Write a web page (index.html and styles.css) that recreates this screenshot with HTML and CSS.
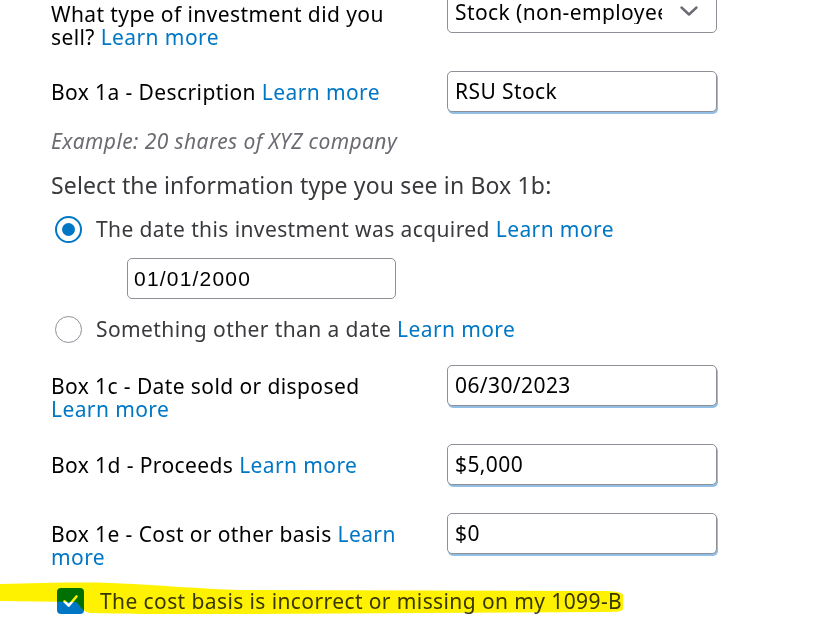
FILE: index.html
```html
<!DOCTYPE html>
<html lang="en">
<head>
<meta charset="utf-8">
<title>1099-B entry</title>
<link rel="stylesheet" href="styles.css">
</head>
<body>
<form class="form">
  <div class="row row-type">
    <div class="label">What type of investment did you sell? <a class="link" href="#">Learn more</a></div>
    <div class="select">
      <span class="select-text">Stock (non-employee stock plan)</span>
      <svg class="chevron" width="18" height="10" viewBox="0 0 18 10"><path d="M1.5 1.5 L9 8.5 L16.5 1.5" fill="none" stroke="#6b6c72" stroke-width="2.4" stroke-linecap="round" stroke-linejoin="round"/></svg>
    </div>
  </div>

  <div class="row row-desc">
    <div class="label">Box 1a - Description <a class="link" href="#">Learn more</a></div>
    <div class="input input-shadow">RSU Stock</div>
  </div>

  <p class="example">Example: 20 shares of XYZ company</p>

  <p class="question">Select the information type you see in Box 1b:</p>

  <div class="radio-row radio-first">
    <span class="radio radio-on"></span>
    <span class="radio-label">The date this investment was acquired <a class="link" href="#">Learn more</a></span>
  </div>
  <div class="input date-input">01/01/2000</div>

  <div class="radio-row radio-second">
    <span class="radio"></span>
    <span class="radio-label">Something other than a date <a class="link" href="#">Learn more</a></span>
  </div>

  <div class="row row-1c">
    <div class="label">Box 1c - Date sold or disposed <a class="link" href="#">Learn more</a></div>
    <div class="input input-shadow">06/30/2023</div>
  </div>

  <div class="row row-1d">
    <div class="label">Box 1d - Proceeds <a class="link" href="#">Learn more</a></div>
    <div class="input input-shadow">$5,000</div>
  </div>

  <div class="row row-1e">
    <div class="label">Box 1e - Cost or other basis <a class="link" href="#">Learn more</a></div>
    <div class="input input-shadow">$0</div>
  </div>

  <div class="check-row">
    <span class="checkbox">
      <svg width="27" height="26" viewBox="0 0 27 26"><path d="M7.5 13.5 L11.8 17.5 L19.5 8.5" fill="none" stroke="#fff" stroke-width="2.6" stroke-linecap="round" stroke-linejoin="round"/></svg>
    </span>
    <span class="check-label">The cost basis is incorrect or missing on my 1099-B</span>
    <svg class="highlight" width="640" height="40" viewBox="0 580 640 40"><path d="M0 583 C40 582 80 581 110 582 C160 584 200 588 240 589 L600 590 C615 590 622 591 623 594 L623 608 C622 611 615 611 600 611 L240 613 C160 613 110 613 90 612 C82 611 80 604 76 601 L0 600 Z" fill="#fff200"/></svg>
  </div>
</form>
</body>
</html>
```

FILE: styles.css
```css
html, body {
  margin: 0;
  padding: 0;
  background: #ffffff;
}

body {
  font-family: "Noto Sans", "Open Sans", sans-serif;
  font-size: 21px;
  line-height: 23px;
  letter-spacing: 0.4px;
  color: #000000;
  overflow: hidden;
  height: 624px;
}

.form {
  display: flex;
  flex-direction: column;
  padding-left: 51px;
  margin-top: -8px;
}

.row {
  display: grid;
  grid-template-columns: 362px 270px;
  column-gap: 34px;
  align-items: start;
}

.label {
  padding-top: 10px;
  color: #000000;
}

.row-type .label {
  padding-top: 11px;
}

.link {
  color: #0077c5;
  text-decoration: none;
}

.select {
  height: 41px;
  box-sizing: border-box;
  border: 1px solid #8d9096;
  border-radius: 5px;
  display: flex;
  align-items: center;
  padding: 0 18px 0 7px;
  gap: 18px;
}

.select-text {
  flex: 1;
  white-space: nowrap;
  overflow: hidden;
  color: #000;
}

.chevron {
  flex: none;
  margin-top: -3px;
}

.input {
  height: 41px;
  box-sizing: border-box;
  border: 1px solid #8d9096;
  border-radius: 5px;
  padding: 0 7px;
  display: flex;
  align-items: center;
  color: #000;
  background: #fff;
}

.input-shadow {
  box-shadow: 1px 2px 0 0 #93bfe6;
}

.row-desc { margin-top: 22px; }

.example {
  margin: 18px 0 0;
  font-style: italic;
  color: #6b6c72;
}

.question {
  margin: 21px 0 0;
  color: #393a3d;
  font-size: 23px;
  letter-spacing: 0.15px;
}

.radio-row {
  display: flex;
  align-items: center;
  gap: 14px;
  padding-left: 4px;
  color: #393a3d;
}

.radio-first { margin-top: 19px; }
.radio-second { margin-top: 17px; }

.radio {
  width: 27px;
  height: 27px;
  box-sizing: border-box;
  border-radius: 50%;
  border: 1px solid #8d9096;
  flex: none;
  position: relative;
  background: #fff;
}

.radio-on {
  border: 2px solid #0077c5;
}

.radio-on::after {
  content: "";
  position: absolute;
  left: 50%;
  top: 50%;
  width: 13px;
  height: 13px;
  margin: -6.5px 0 0 -6.5px;
  border-radius: 50%;
  background: #0077c5;
}

.date-input {
  margin: 15px 0 0 76px;
  width: 269px;
  font-family: "Liberation Sans", Arial, sans-serif;
  letter-spacing: 1.2px;
  padding-left: 6px;
}

.row-1c { margin-top: 22px; }
.row-1d { margin-top: 23px; }
.row-1e { margin-top: 28px; }

.check-row {
  display: flex;
  align-items: center;
  gap: 16px;
  padding-left: 6px;
  margin-top: 19px;
  color: #393a3d;
  position: relative;
}

.checkbox {
  width: 27px;
  height: 26px;
  border-radius: 4px;
  background: #0077c5;
  flex: none;
  display: block;
}

.checkbox svg {
  display: block;
}

.highlight {
  position: absolute;
  left: -51px;
  top: -7px;
  mix-blend-mode: multiply;
  pointer-events: none;
}
```
